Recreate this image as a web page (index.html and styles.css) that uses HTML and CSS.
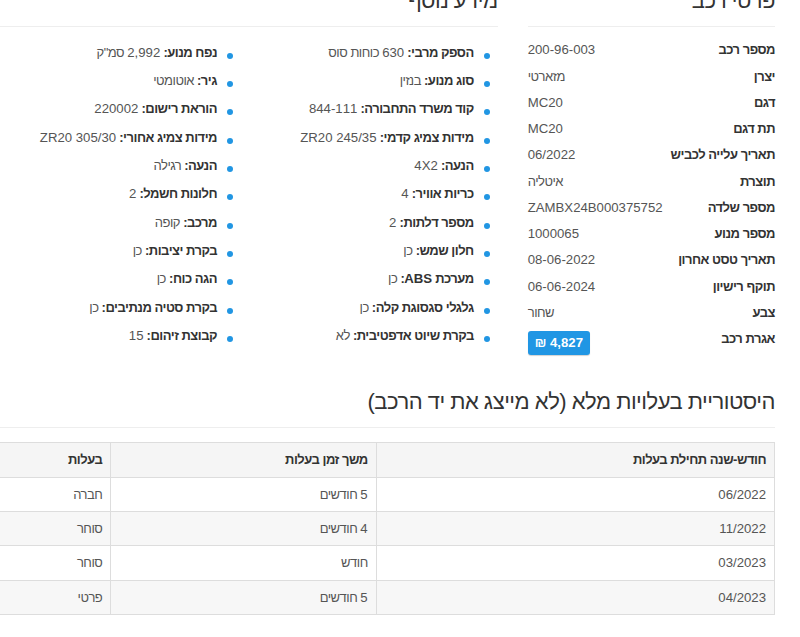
FILE: index.html
```html
<!DOCTYPE html>
<html lang="he" dir="rtl">
<head>
<meta charset="utf-8">
<title>פרטי רכב</title>
<link rel="stylesheet" href="styles.css">
</head>
<body>
<div class="page">
  <div class="top">
    <section class="details">
      <div class="section-header"><h3>פרטי רכב</h3></div>
      <dl class="spec">
        <div class="spec-row"><dt>מספר רכב</dt><dd><span class="en">200-96-003</span></dd></div>
        <div class="spec-row"><dt>יצרן</dt><dd>מזארטי</dd></div>
        <div class="spec-row"><dt>דגם</dt><dd><span class="en">MC20</span></dd></div>
        <div class="spec-row"><dt>תת דגם</dt><dd><span class="en">MC20</span></dd></div>
        <div class="spec-row"><dt>תאריך עלייה לכביש</dt><dd><span class="en">06/2022</span></dd></div>
        <div class="spec-row"><dt>תוצרת</dt><dd>איטליה</dd></div>
        <div class="spec-row"><dt>מספר שלדה</dt><dd><span class="en">ZAMBX24B000375752</span></dd></div>
        <div class="spec-row"><dt>מספר מנוע</dt><dd><span class="en">1000065</span></dd></div>
        <div class="spec-row"><dt>תאריך טסט אחרון</dt><dd><span class="en">08-06-2022</span></dd></div>
        <div class="spec-row"><dt>תוקף רישיון</dt><dd><span class="en">06-06-2024</span></dd></div>
        <div class="spec-row"><dt>צבע</dt><dd>שחור</dd></div>
        <div class="spec-row"><dt>אגרת רכב</dt><dd><span class="badge" dir="ltr">₪ 4,827</span></dd></div>
      </dl>
    </section>
    <section class="extra">
      <div class="section-header"><h3>מידע נוסף</h3></div>
      <div class="lists">
        <ul class="info-list">
          <li><span class="dot"></span><span><b>הספק מרבי:</b> <span class="en">630</span> כוחות סוס</span></li>
          <li><span class="dot"></span><span><b>סוג מנוע:</b> בנזין</span></li>
          <li><span class="dot"></span><span><b>קוד משרד התחבורה:</b> <span class="en">844-111</span></span></li>
          <li><span class="dot"></span><span><b>מידות צמיג קדמי:</b> <span class="en">245/35 ZR20</span></span></li>
          <li><span class="dot"></span><span><b>הנעה:</b> <span class="en">4X2</span></span></li>
          <li><span class="dot"></span><span><b>כריות אוויר:</b> <span class="en">4</span></span></li>
          <li><span class="dot"></span><span><b>מספר דלתות:</b> <span class="en">2</span></span></li>
          <li><span class="dot"></span><span><b>חלון שמש:</b> כן</span></li>
          <li><span class="dot"></span><span><b>מערכת <span class="en">ABS</span>:</b> כן</span></li>
          <li><span class="dot"></span><span><b>גלגלי סגסוגת קלה:</b> כן</span></li>
          <li><span class="dot"></span><span><b>בקרת שיוט אדפטיבית:</b> לא</span></li>
        </ul>
        <ul class="info-list">
          <li><span class="dot"></span><span><b>נפח מנוע:</b> <span class="en">2,992</span> סמ"ק</span></li>
          <li><span class="dot"></span><span><b>גיר:</b> אוטומטי</span></li>
          <li><span class="dot"></span><span><b>הוראת רישום:</b> <span class="en">220002</span></span></li>
          <li><span class="dot"></span><span><b>מידות צמיג אחורי:</b> <span class="en">305/30 ZR20</span></span></li>
          <li><span class="dot"></span><span><b>הנעה:</b> רגילה</span></li>
          <li><span class="dot"></span><span><b>חלונות חשמל:</b> <span class="en">2</span></span></li>
          <li><span class="dot"></span><span><b>מרכב:</b> קופה</span></li>
          <li><span class="dot"></span><span><b>בקרת יציבות:</b> כן</span></li>
          <li><span class="dot"></span><span><b>הגה כוח:</b> כן</span></li>
          <li><span class="dot"></span><span><b>בקרת סטיה מנתיבים:</b> כן</span></li>
          <li><span class="dot"></span><span><b>קבוצת זיהום:</b> <span class="en">15</span></span></li>
        </ul>
      </div>
    </section>
  </div>

  <section class="history">
    <div class="section-header"><h3>היסטוריית בעלויות מלא (לא מייצג את יד הרכב)</h3></div>
    <table class="owners">
      <colgroup>
        <col class="c1"><col class="c2"><col class="c3">
      </colgroup>
      <thead>
        <tr><th>חודש-שנה תחילת בעלות</th><th>משך זמן בעלות</th><th>בעלות</th></tr>
      </thead>
      <tbody>
        <tr><td><span class="en">06/2022</span></td><td><span class="en">5</span> חודשים</td><td>חברה</td></tr>
        <tr><td><span class="en">11/2022</span></td><td><span class="en">4</span> חודשים</td><td>סוחר</td></tr>
        <tr><td><span class="en">03/2023</span></td><td>חודש</td><td>סוחר</td></tr>
        <tr><td><span class="en">04/2023</span></td><td><span class="en">5</span> חודשים</td><td>פרטי</td></tr>
      </tbody>
    </table>
  </section>
</div>
</body>
</html>
```

FILE: styles.css
```css
html, body {
  margin: 0;
  padding: 0;
  overflow: hidden;
  background: #fff;
}
body {
  direction: rtl;
  font-family: "Liberation Sans", Arial, sans-serif;
  font-size: 13px;
  letter-spacing: -0.5px;
  color: #333;
}
.en {
  font-size: 13.2px;
  letter-spacing: 0;
  line-height: 1;
}
.page {
  width: 900px;
  margin-right: 25px;
}
.top {
  display: grid;
  grid-template-columns: 247.3px 1fr;
  column-gap: 30px;
}
.section-header {
  margin-top: -16.25px;
  padding-bottom: 9px;
  border-bottom: 1px solid #eee;
}
.section-header h3 {
  margin: 0;
  font-size: 22px;
  line-height: 33.25px;
  font-weight: 400;
  color: #333;
}

/* vehicle details */
.spec {
  margin: 10.36px 0 0;
}
.spec-row {
  display: flex;
  justify-content: space-between;
  align-items: flex-start;
  min-height: 20.27px;
  padding: 3px 0;
  line-height: 20.27px;
}
.spec-row dt {
  font-weight: 700;
  color: #333;
}
.spec-row dd {
  margin: 0;
  color: #555;
}
.badge {
  display: inline-block;
  margin-top: 2px;
  padding: 2px 7px;
  line-height: 20px;
  font-size: 13.2px;
  letter-spacing: 0;
  background: #2096e4;
  color: #fff;
  font-weight: 700;
  border-radius: 3px;
  box-shadow: 0 1px 1px rgba(0, 0, 0, 0.18);
}

/* additional info */
.lists {
  display: grid;
  grid-template-columns: 256.7px 256.7px;
  margin-top: 11.6px;
}
.info-list {
  list-style: none;
  margin: 0;
  padding: 0 8px 0 0;
}
.info-list li {
  display: flex;
  align-items: flex-start;
  gap: 10px;
  height: 28.34px;
  line-height: 28.34px;
  white-space: nowrap;
  color: #555;
}
.info-list b {
  color: #333;
}
.dot {
  flex: none;
  width: 6px;
  height: 6px;
  margin-top: 14px;
  border-radius: 50%;
  background: #2196e3;
}

/* ownership history */
.history .section-header {
  margin-top: 26.45px;
}
.owners {
  width: 100%;
  margin-top: 14.3px;
  border-collapse: collapse;
  table-layout: fixed;
}
.owners .c1 { width: 398.3px; }
.owners .c2 { width: 265.4px; }
.owners th,
.owners td {
  height: 19.4px;
  border: 1px solid #ddd;
  padding: 7px 8px;
  line-height: 19.4px;
  text-align: right;
}
.owners th {
  font-weight: 700;
  color: #333;
  background: #f5f5f5;
}
.owners td {
  color: #555;
}
.owners tbody tr:nth-child(even) td {
  background: #f7f7f7;
}
```
